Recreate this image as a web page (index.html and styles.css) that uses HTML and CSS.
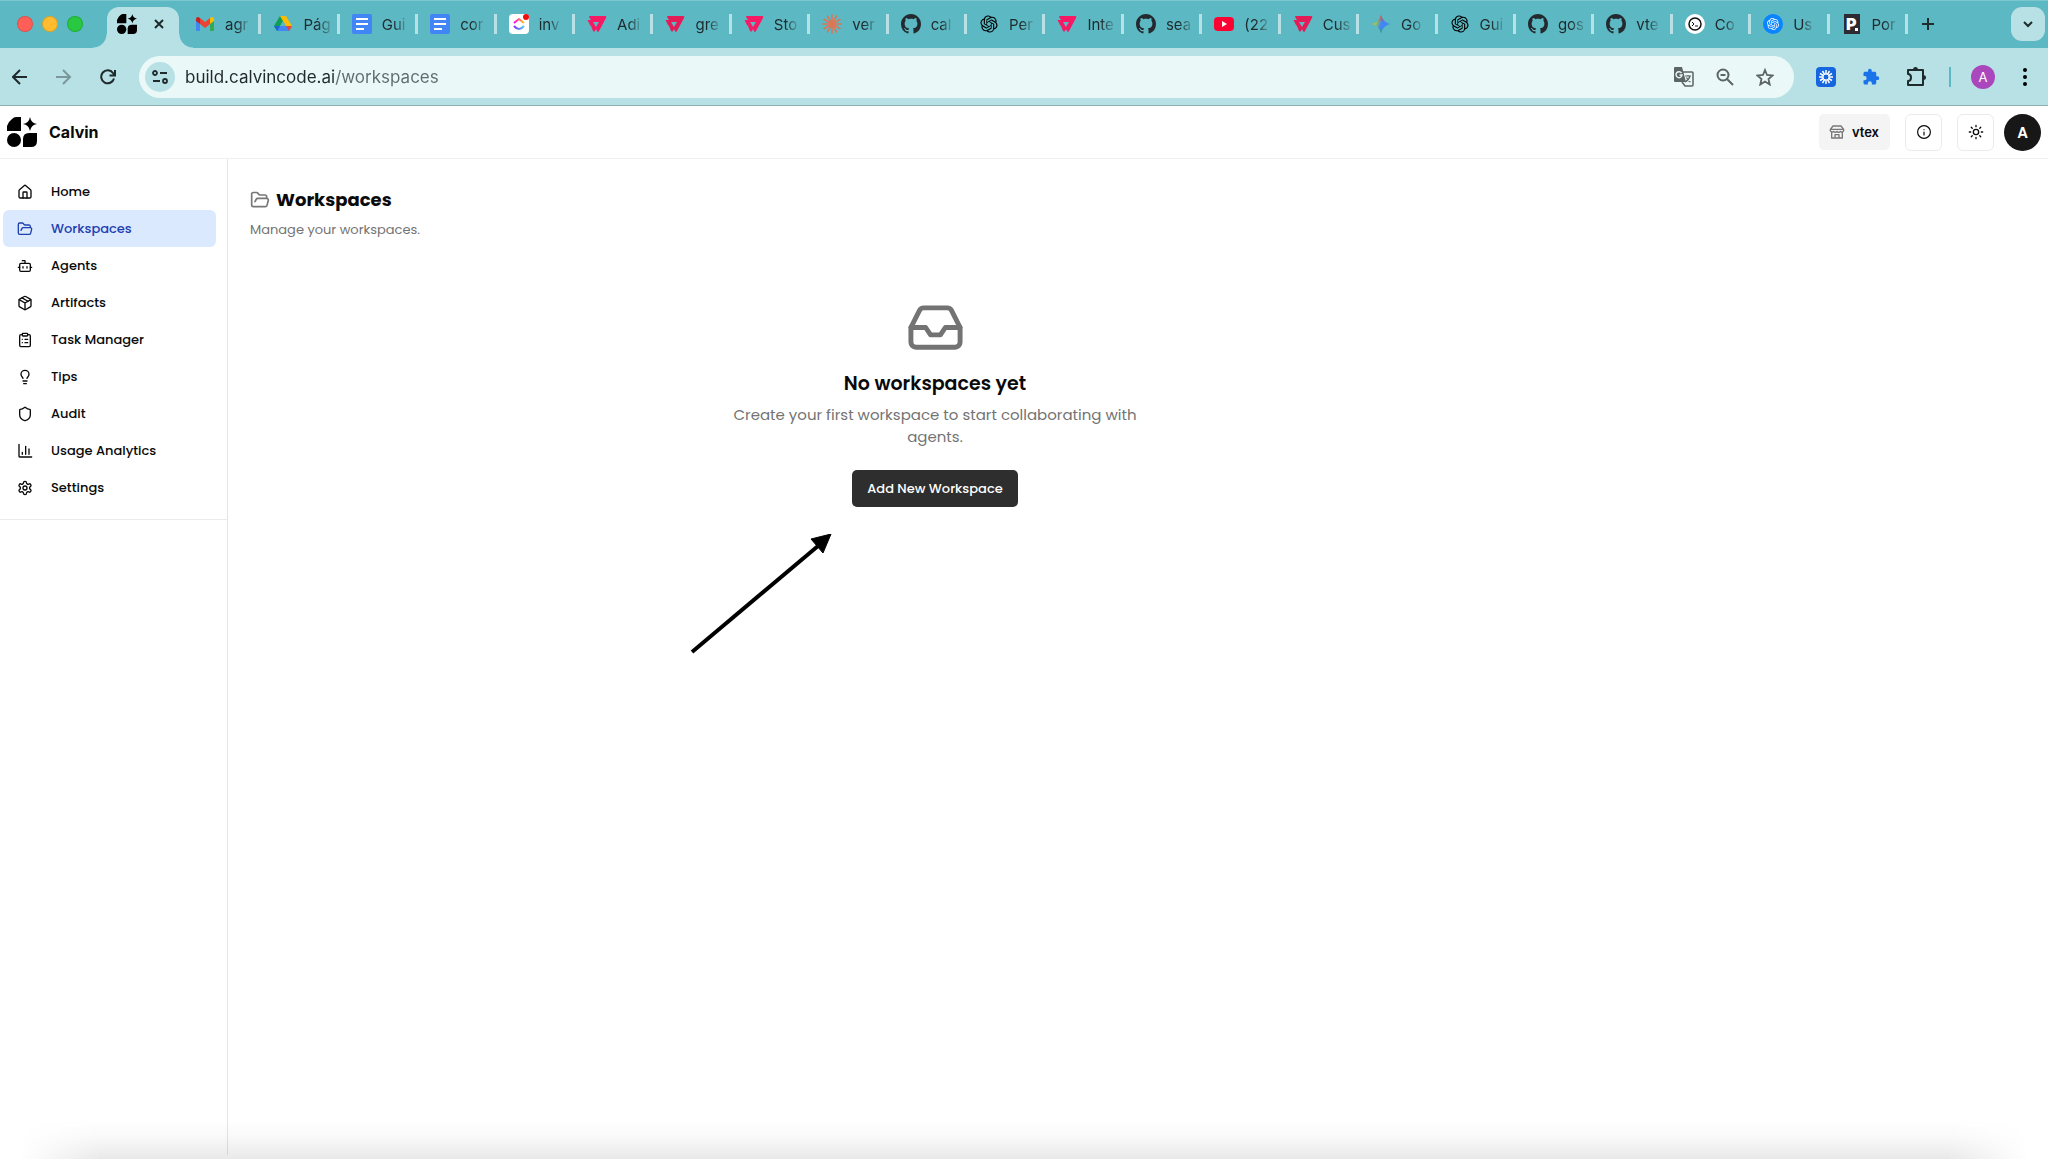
FILE: index.html
```
<!DOCTYPE html>
<html lang="en">
<head>
<meta charset="utf-8">
<title>Calvin – Workspaces</title>
<link rel="stylesheet" href="styles.css">
</head>
<body>
<svg class="sprite" aria-hidden="true">
  <symbol id="calvin" viewBox="0 0 30 30"><path d="M9 0h5v14H0V9Q1 5 5 2Q7 0 9 0zM23 0q1 6 7 7q-6 1-7 7q-1-6-7-7q6-1 7-7z"/><circle cx="7" cy="23" r="7"/><path d="M22 16h8v8q0 6-6 6h-8v-8q0-6 6-6z"/></symbol>
  <symbol id="docs" viewBox="0 0 20 20"><rect width="20" height="20" rx="2" fill="#4285f4"/><path d="M4 5h12M4 10h12M4 15h8" stroke="#fff" stroke-width="2"/></symbol>
  <symbol id="vtex" viewBox="0 0 20 20"><path d="M3 2h15q2 0 1 2l-7 13q-1 2-2 0l-1-2-1 2q-1 1-2 0L4 12 3 11 1 7q-1-1 0-1h3L2 3q0-1 1-1zM6 8l3 5 3-5z" fill-rule="evenodd"/></symbol>
  <symbol id="github" viewBox="0 0 16 16"><path fill="#24292f" d="M8 0c4.42 0 8 3.58 8 8a8.013 8.013 0 0 1-5.45 7.59c-.4.08-.55-.17-.55-.38 0-.27.01-1.13.01-2.2 0-.75-.25-1.23-.54-1.48 1.78-.2 3.65-.88 3.65-3.95 0-.88-.31-1.59-.82-2.15.08-.2.36-1.02-.08-2.12 0 0-.67-.22-2.2.82-.64-.18-1.32-.27-2-.27-.68 0-1.36.09-2 .27-1.53-1.03-2.2-.82-2.2-.82-.44 1.1-.16 1.92-.08 2.12-.51.56-.82 1.28-.82 2.15 0 3.06 1.86 3.75 3.64 3.95-.23.2-.44.55-.51 1.07-.46.21-1.61.55-2.33-.66-.15-.24-.6-.83-1.23-.82-.67.01-.27.38.01.53.34.19.73.9.82 1.13.16.45.68 1.31 2.69.94 0 .67.01 1.3.01 1.49 0 .21-.15.45-.55.38A7.995 7.995 0 0 1 0 8c0-4.42 3.58-8 8-8Z"/></symbol>
  <symbol id="openai" viewBox="-2 -2 28 28"><path d="M22.2819 9.8211a5.9847 5.9847 0 0 0-.5157-4.9108 6.0462 6.0462 0 0 0-6.5098-2.9A6.0651 6.0651 0 0 0 4.9807 4.1818a5.9847 5.9847 0 0 0-3.9977 2.9 6.0462 6.0462 0 0 0 .7427 7.0966 5.98 5.98 0 0 0 .511 4.9107 6.051 6.051 0 0 0 6.5146 2.9001A5.9847 5.9847 0 0 0 13.2599 24a6.0557 6.0557 0 0 0 5.7718-4.2058 5.9894 5.9894 0 0 0 3.9977-2.9001 6.0557 6.0557 0 0 0-.7475-7.0729zm-9.022 12.6081a4.4755 4.4755 0 0 1-2.8764-1.0408l.1419-.0804 4.7783-2.7582a.7948.7948 0 0 0 .3927-.6813v-6.7369l2.02 1.1686a.071.071 0 0 1 .038.052v5.5826a4.504 4.504 0 0 1-4.4945 4.4944zm-9.6607-4.1254a4.4708 4.4708 0 0 1-.5346-3.0137l.142.0852 4.783 2.7582a.7712.7712 0 0 0 .7806 0l5.8428-3.3685v2.3324a.0804.0804 0 0 1-.0332.0615L9.74 19.9502a4.4992 4.4992 0 0 1-6.1408-1.6464zM2.3408 7.8956a4.485 4.485 0 0 1 2.3655-1.9728V11.6a.7664.7664 0 0 0 .3879.6765l5.8144 3.3543-2.0201 1.1685a.0757.0757 0 0 1-.071 0l-4.8303-2.7865A4.504 4.504 0 0 1 2.3408 7.872zm16.5963 3.8558L13.1038 8.364 15.1192 7.2a.0757.0757 0 0 1 .071 0l4.8303 2.7913a4.4944 4.4944 0 0 1-.6765 8.1042v-5.6772a.79.79 0 0 0-.407-.667zm2.0107-3.0231l-.142-.0852-4.7735-2.7818a.7759.7759 0 0 0-.7854 0L9.409 9.2297V6.8974a.0662.0662 0 0 1 .0284-.0615l4.8303-2.7866a4.4992 4.4992 0 0 1 6.6802 4.66zM8.3065 12.863l-2.02-1.1638a.0804.0804 0 0 1-.038-.0567V6.0742a4.4992 4.4992 0 0 1 7.3757-3.4537l-.142.0805L8.704 5.459a.7948.7948 0 0 0-.3927.6813zm1.0976-2.3654l2.602-1.4998 2.6069 1.4998v2.9994l-2.5974 1.4997-2.6067-1.4997Z"/></symbol>
  <symbol id="burst" viewBox="0 0 20 20"><path fill="none" stroke="currentColor" stroke-width="1.700" stroke-linecap="round" d="M10 1v18M1 10h18M5.500 2.200l9 15.600M2.200 5.500l15.600 9M2.200 14.500l15.600-9M5.500 17.800l9-15.600"/></symbol>
  <symbol id="folder" viewBox="0 0 24 24"><path d="m6 14 1.500-2.900A2 2 0 0 1 9.240 10H20a2 2 0 0 1 1.940 2.500l-1.540 6a2 2 0 0 1-1.950 1.500H4a2 2 0 0 1-2-2V5a2 2 0 0 1 2-2h3.900a2 2 0 0 1 1.690.9l.81 1.200a2 2 0 0 0 1.670.9H18a2 2 0 0 1 2 2v2"/></symbol>
  <symbol id="puzzle" viewBox="0 0 24 24"><path d="M20.500 11H19V7c0-1.100-.9-2-2-2h-4V3.500a2.500 2.500 0 0 0-5 0V5H4c-1.100 0-2 .9-2 2v3.800h1.500a2.700 2.700 0 0 1 0 5.400H2V20c0 1.100.9 2 2 2h3.800v-1.500a2.700 2.700 0 0 1 5.400 0V22H17c1.100 0 2-.9 2-2v-4h1.500a2.500 2.500 0 0 0 0-5z"/></symbol>
</svg>

<header class="browser">
  <div class="tabstrip">
    <div class="lights"><i class="light close"></i><i class="light minimise"></i><i class="light zoom"></i></div>
    <div class="tab-active">
      <svg class="fav"><use href="#calvin"/></svg>
      <button class="bare" aria-label="Close tab"><svg class="s10" viewBox="0 0 10 10"><path d="M1 1l8 8M9 1l-8 8" stroke="#1f2a2c" stroke-width="2"/></svg></button>
    </div>
    <nav class="tabs" aria-label="Open tabs">
      <button class="tab"><svg class="fav" viewBox="0 0 20 20"><path d="M1 5v11q0 1 1 1h3V8z" fill="#4285f4"/><path d="M19 5v11q0 1-1 1h-3V8z" fill="#34a853"/><path d="M15 4l2-1q2 0 2 2v2l-4 3z" fill="#fbbc04"/><path d="M5 4L3 3Q1 3 1 5v2l4 3z" fill="#c5221f"/><path d="M5 4l5 4 5-4v6l-5 4-5-4z" fill="#ea4335"/></svg><span>agr</span></button>
      <button class="tab"><svg class="fav" viewBox="0 0 20 20"><path d="M7 2h6l-3 5-5.500 10L1 12z" fill="#0f9d58"/><path d="M7 2h6l6 10h-6z" fill="#fbbc04"/><path d="M5 12h9l3 5H4z" fill="#4285f4"/><path d="M13 12h6l-3 5z" fill="#ea4335"/><path d="M1 12h6l-3 5z" fill="#1967d2"/><path d="M10 7l3 5H7z" fill="#5cb8c2"/></svg><span>Pág</span></button>
      <button class="tab"><svg class="fav"><use href="#docs"/></svg><span>Gui</span></button>
      <button class="tab"><svg class="fav"><use href="#docs"/></svg><span>cor</span></button>
      <button class="tab"><svg class="fav" viewBox="0 0 20 20"><defs><linearGradient id="cu1"><stop stop-color="#ff02f0"/><stop offset="1" stop-color="#ffc800"/></linearGradient><linearGradient id="cu2"><stop stop-color="#8930fd"/><stop offset="1" stop-color="#49ccf9"/></linearGradient></defs><rect width="20" height="20" rx="4" fill="#fff"/><path d="M5 9l5-4 5 4" fill="none" stroke="url(#cu1)" stroke-width="2"/><path d="M5 12q5 6 10 0" fill="none" stroke="url(#cu2)" stroke-width="2"/><circle cx="17" cy="3" r="3" fill="#f10c0c"/></svg><span>inv</span></button>
      <button class="tab"><svg class="fav pink"><use href="#vtex"/></svg><span>Adi</span></button>
      <button class="tab"><svg class="fav crimson"><use href="#vtex"/></svg><span>gre</span></button>
      <button class="tab"><svg class="fav pink"><use href="#vtex"/></svg><span>Sto</span></button>
      <button class="tab"><svg class="fav clay"><use href="#burst"/></svg><span>ver</span></button>
      <button class="tab"><svg class="fav"><use href="#github"/></svg><span>cal</span></button>
      <button class="tab"><svg class="fav"><use href="#openai"/></svg><span>Per</span></button>
      <button class="tab"><svg class="fav pink"><use href="#vtex"/></svg><span>Inte</span></button>
      <button class="tab"><svg class="fav"><use href="#github"/></svg><span>sea</span></button>
      <button class="tab"><svg class="fav" viewBox="0 0 20 20"><rect y="3" width="20" height="14" rx="4" fill="#f03"/><path d="M8 7l5 3-5 3z" fill="#fff"/></svg><span>(22</span></button>
      <button class="tab"><svg class="fav crimson"><use href="#vtex"/></svg><span>Cus</span></button>
      <button class="tab"><svg class="fav" viewBox="0 0 20 20"><defs><linearGradient id="gem" y2=".3"><stop stop-color="#fbbc04"/><stop offset=".35" stop-color="#8fbf63"/><stop offset=".6" stop-color="#4285f4"/><stop offset="1" stop-color="#4285f4"/></linearGradient><linearGradient id="gem2" x2="0" y2="1"><stop stop-color="#ea4335"/><stop offset=".4" stop-color="#ea4335" stop-opacity="0"/><stop offset=".7" stop-color="#34a853" stop-opacity="0"/><stop offset="1" stop-color="#34a853"/></linearGradient></defs><path d="M10 1q2 7 9 9q-7 2-9 9q-2-7-9-9q7-2 9-9z" fill="url(#gem)"/><path d="M10 1q2 7 9 9q-7 2-9 9q-2-7-9-9q7-2 9-9z" fill="url(#gem2)"/></svg><span>Go</span></button>
      <button class="tab"><svg class="fav"><use href="#openai"/></svg><span>Gui</span></button>
      <button class="tab"><svg class="fav"><use href="#github"/></svg><span>gos</span></button>
      <button class="tab"><svg class="fav"><use href="#github"/></svg><span>vte</span></button>
      <button class="tab"><svg class="fav" viewBox="0 0 20 20"><circle cx="10" cy="10" r="10" fill="#fff"/><circle cx="10" cy="10" r="6" fill="none" stroke="#111" stroke-width="1.500"/><path d="M7 8l2 2-2 2M10 12h3" fill="none" stroke="#111"/></svg><span>Co</span></button>
      <button class="tab"><svg class="fav" viewBox="0 0 20 20"><circle cx="10" cy="10" r="10" fill="#0a84ff"/><use href="#openai" x="3" y="3" width="14" height="14" fill="#fff"/></svg><span>Us</span></button>
      <button class="tab"><svg class="fav" viewBox="0 0 20 20"><path fill="#2d2a32" d="M2 0h16v20H2z"/><text class="glyph" x="4" y="16">P</text><path fill="#fff" d="M13 14h3v3h-3z"/></svg><span>Por</span></button>
    </nav>
    <button class="bare new-tab" aria-label="New tab"><svg class="s14" viewBox="0 0 14 14"><path d="M7 1v12M1 7h12" stroke="#1f2a2c" stroke-width="2"/></svg></button>
    <button class="tab-search" aria-label="Search tabs"><svg class="s14" viewBox="0 0 14 14"><path d="M3 5l4 4 4-4" fill="none" stroke="#1f2a2c" stroke-width="2"/></svg></button>
  </div>

  <div class="toolbar">
    <button class="bare" aria-label="Back"><svg class="s16" viewBox="0 0 16 16"><path d="M15 8H2M8 1L1 8l7 7" fill="none" stroke="#1f2a2c" stroke-width="2"/></svg></button>
    <button class="bare" aria-label="Forward"><svg class="s16" viewBox="0 0 16 16"><path d="M0 8h13M7 1l7 7-7 7" fill="none" stroke="#7b979a" stroke-width="2"/></svg></button>
    <button class="bare" aria-label="Reload"><svg class="s16" viewBox="0 0 16 16"><path d="M14 9.500A6.500 6.500 0 1 1 13 4l1.500 2M15 1v5.500H9.500" fill="none" stroke="#1f2a2c" stroke-width="2"/></svg></button>
    <div class="omnibox">
      <button class="site-info" aria-label="View site information"><svg class="s16" viewBox="0 0 16 16" fill="none" stroke="#1f2a2c" stroke-width="1.800"><circle cx="3" cy="4" r="2"/><path d="M8 4h7M1 12h7"/><circle cx="13" cy="12" r="2"/></svg></button>
      <input class="url" aria-label="Address" value="build.calvincode.ai/workspaces">
      <button class="bare" aria-label="Translate"><svg class="s20" viewBox="0 0 20 20"><path d="M9 5h9q1 0 1 1v12q0 1-1 1h-7L8 15" fill="none" stroke="#5c6466" stroke-width="1.500"/><path d="M1 0h7l4 15H1q-1 0-1-1V1q0-1 1-1z" fill="#5c6466"/><path d="M7.500 6A3 3 0 1 0 8 8H5.500" fill="none" stroke="#ebf8f8" stroke-width="1.400"/><path d="M11 9h6M14 8v1M16 9q-1 4-5 6M12.500 10.500q1 3 4 4.500" fill="none" stroke="#5c6466" stroke-width="1.200"/></svg></button>
      <button class="bare" aria-label="Zoom"><svg class="s18" viewBox="0 0 18 18" fill="none" stroke="#5c6466" stroke-width="2"><circle cx="7" cy="7" r="5.500"/><path d="M11 11l6 6M4.500 7h5"/></svg></button>
      <button class="bare" aria-label="Bookmark this tab"><svg class="s18" viewBox="0 0 18 18" fill="none" stroke="#5c6466" stroke-width="1.800"><path d="M9 2l2 5 5.500.5-4 3.500 1.200 5.500L9 13.500 4.300 16.500 5.500 11l-4-3.500L7 7z"/></svg></button>
    </div>
    <div class="extensions">
      <button class="bare ext" aria-label="Claude extension"><svg class="s20" viewBox="0 0 20 20"><rect width="20" height="20" rx="4" fill="#1666e0"/><path d="M10 3v4M10 13v4M3 10h4M13 10h4M6.500 4l2 3.400M11.500 12.600l2 3.400M4 6.500l3.400 2M12.600 11.500l3.400 2M4 13.500l3.400-2M12.600 8.500l3.400-2M6.500 16l2-3.400M11.500 7.400l2-3.400" stroke="#fff" stroke-width="1.500"/><circle cx="10" cy="10" r="3" fill="none" stroke="#fff"/></svg></button>
      <button class="bare ext" aria-label="Extension"><svg class="s18" fill="#1a73e8"><use href="#puzzle"/></svg></button>
      <button class="bare ext" aria-label="Extensions"><svg class="s20" viewBox="0 0 20 20"><path d="M2 3h15v15H2v-4q3 0 3-3.500T2 7z" fill="none" stroke="#1f2a2c" stroke-width="2" stroke-linejoin="round"/><path d="M7 3q0-3 2.500-3T12 3zM17 8q3 0 3 2.500T17 13z" fill="#1f2a2c"/></svg></button>
      <i class="divider"></i>
      <button class="profile" aria-label="Profile">A</button>
      <button class="bare" aria-label="Browser menu"><svg class="s20" viewBox="0 0 20 20"><circle cx="10" cy="3" r="2"/><circle cx="10" cy="10" r="2"/><circle cx="10" cy="17" r="2"/></svg></button>
    </div>
  </div>
</header>

<header class="topbar">
  <a class="brand" href="#"><svg class="logo"><use href="#calvin"/></svg>Calvin</a>
  <button class="org"><svg class="icon s16" viewBox="0 0 24 24"><path d="M6 3h12l4 5H2zM2 8v2a3 3 0 0 0 5 1a3 3 0 0 0 5 0a3 3 0 0 0 5 0a3 3 0 0 0 5-1V8M4 12v9h16v-9M9 21v-5h6v5"/></svg>vtex</button>
  <button class="square" aria-label="Information"><svg class="icon s14" viewBox="0 0 24 24"><circle cx="12" cy="12" r="11"/><path d="M12 17v-5M12 8h.01"/></svg></button>
  <button class="square" aria-label="Toggle theme"><svg class="icon s16" viewBox="0 0 24 24"><circle cx="12" cy="12" r="4"/><path d="M12 2v2M12 20v2M4.930 4.930l1.410 1.410M17.660 17.660l1.410 1.410M2 12h2M20 12h2M6.340 17.660l-1.410 1.410M19.070 4.930l-1.410 1.410"/></svg></button>
  <button class="avatar" aria-label="Account">A</button>
</header>

<div class="layout">
  <aside class="sidebar">
    <nav class="menu">
      <a href="#"><svg class="icon s16" viewBox="0 0 24 24"><path d="M15 21v-8a1 1 0 0 0-1-1h-4a1 1 0 0 0-1 1v8"/><path d="M3 10a2 2 0 0 1 .709-1.528l7-5.999a2 2 0 0 1 2.582 0l7 5.999A2 2 0 0 1 21 10v9a2 2 0 0 1-2 2H5a2 2 0 0 1-2-2z"/></svg>Home</a>
      <a href="#" class="current"><svg class="icon s16"><use href="#folder"/></svg>Workspaces</a>
      <a href="#"><svg class="icon s16" viewBox="0 0 24 24"><path d="M12 8V4H8"/><rect width="16" height="12" x="4" y="8" rx="2"/><path d="M2 14h2M20 14h2M15 13v2M9 13v2"/></svg>Agents</a>
      <a href="#"><svg class="icon s16" viewBox="0 0 24 24"><path d="m7.500 4.270 9 5.150"/><path d="M21 8a2 2 0 0 0-1-1.730l-7-4a2 2 0 0 0-2 0l-7 4A2 2 0 0 0 3 8v8a2 2 0 0 0 1 1.730l7 4a2 2 0 0 0 2 0l7-4A2 2 0 0 0 21 16Z"/><path d="m3.300 7 8.700 5 8.700-5M12 22V12"/></svg>Artifacts</a>
      <a href="#"><svg class="icon s16" viewBox="0 0 24 24"><rect width="8" height="4" x="8" y="2" rx="1"/><path d="M16 4h2a2 2 0 0 1 2 2v14a2 2 0 0 1-2 2H6a2 2 0 0 1-2-2V6a2 2 0 0 1 2-2h2M12 11h4M12 16h4M8 11h.01M8 16h.01"/></svg>Task Manager</a>
      <a href="#"><svg class="icon s16" viewBox="0 0 24 24"><path d="M15 14c.2-1 .7-1.700 1.500-2.500 1-.9 1.500-2.200 1.500-3.500A6 6 0 0 0 6 8c0 1 .2 2.200 1.500 3.500.7.700 1.300 1.500 1.500 2.500M9 18h6M10 22h4"/></svg>Tips</a>
      <a href="#"><svg class="icon s16" viewBox="0 0 24 24"><path d="M20 13c0 5-3.500 7.500-7.660 8.950a1 1 0 0 1-.67-.01C7.500 20.500 4 18 4 13V6a1 1 0 0 1 1-1c2 0 4.500-1.200 6.240-2.720a1.170 1.170 0 0 1 1.520 0C14.510 3.810 17 5 19 5a1 1 0 0 1 1 1z"/></svg>Audit</a>
      <a href="#"><svg class="icon s16" viewBox="0 0 24 24"><path d="M3 2v18a1 1 0 0 0 1 1h18M8 17v-3M13 17V5M18 17V9"/></svg>Usage Analytics</a>
      <a href="#"><svg class="icon s16" viewBox="0 0 24 24"><path d="M12.220 2h-.44a2 2 0 0 0-2 2v.18a2 2 0 0 1-1 1.730l-.43.25a2 2 0 0 1-2 0l-.15-.08a2 2 0 0 0-2.730.73l-.22.38a2 2 0 0 0 .73 2.730l.15.1a2 2 0 0 1 1 1.720v.51a2 2 0 0 1-1 1.740l-.15.09a2 2 0 0 0-.73 2.730l.22.38a2 2 0 0 0 2.730.73l.15-.08a2 2 0 0 1 2 0l.43.25a2 2 0 0 1 1 1.730V20a2 2 0 0 0 2 2h.44a2 2 0 0 0 2-2v-.18a2 2 0 0 1 1-1.730l.43-.25a2 2 0 0 1 2 0l.15.08a2 2 0 0 0 2.730-.73l.22-.39a2 2 0 0 0-.73-2.730l-.15-.08a2 2 0 0 1-1-1.740v-.5a2 2 0 0 1 1-1.740l.15-.09a2 2 0 0 0 .73-2.730l-.22-.38a2 2 0 0 0-2.730-.73l-.15.08a2 2 0 0 1-2 0l-.43-.25a2 2 0 0 1-1-1.730V4a2 2 0 0 0-2-2z"/><circle cx="12" cy="12" r="3"/></svg>Settings</a>
    </nav>
  </aside>

  <main class="content">
    <h1><svg class="icon s20"><use href="#folder"/></svg>Workspaces</h1>
    <p class="lead">Manage your workspaces.</p>
    <section class="empty">
      <svg class="icon inbox" viewBox="0 0 24 24"><path d="M22 12h-6l-2 3h-4l-2-3H2"/><path d="M5.450 5.110 2 12v6a2 2 0 0 0 2 2h16a2 2 0 0 0 2-2v-6l-3.450-6.890A2 2 0 0 0 16.760 4H7.240a2 2 0 0 0-1.790 1.110z"/></svg>
      <h2>No workspaces yet</h2>
      <p>Create your first workspace to start collaborating with agents.</p>
      <div class="action">
        <button class="primary">Add New Workspace</button>
        <svg class="pointer" viewBox="0 0 142 120" aria-hidden="true"><path d="M2 118L128 12" stroke="#000" stroke-width="4"/><path d="M141 0L121 5l12 14z" stroke="#000"/></svg>
      </div>
    </section>
  </main>
</div>
<div class="edge-shade"></div>
</body>
</html>
```
FILE: styles.css
```
* { box-sizing: border-box; }

body {
  margin: 0;
  min-height: 100vh;
  display: flex;
  flex-direction: column;
  background: #fff;
  color: #0a0a0a;
  font-family: Poppins, "Open Sans", sans-serif;
  font-size: 13px;
}

h1, h2, p { margin: 0; }
a { color: inherit; text-decoration: none; }
button { font: inherit; color: inherit; border: 0; padding: 0; cursor: pointer; }
svg { display: block; flex: none; }

.sprite { position: absolute; width: 0; height: 0; }
.bare { display: flex; background: none; }
.icon { fill: none; stroke: currentColor; stroke-width: 2; stroke-linecap: round; stroke-linejoin: round; }
.s10 { width: 10px; height: 10px; }
.s14 { width: 14px; height: 14px; }
.s16 { width: 16px; height: 16px; }
.s18 { width: 18px; height: 18px; }
.s20 { width: 20px; height: 20px; }

/* Browser window */
.browser { font-family: Inter, sans-serif; }

.tabstrip {
  display: flex;
  align-items: center;
  height: 48px;
  padding-right: 3px;
  background: #5cb8c2;
  box-shadow: inset 0 1px #7cc6ce;
}
.lights { display: flex; gap: 9px; padding: 0 24px 0 17px; }
.light { width: 16px; height: 16px; border-radius: 50%; border: 1px solid #0002; }
.light.close { background: #ff5f57; }
.light.minimise { background: #febc2e; }
.light.zoom { background: #28c840; }

.tab-active {
  position: relative;
  align-self: flex-end;
  display: flex;
  align-items: center;
  justify-content: space-between;
  width: 72px;
  height: 41px;
  padding: 0 15px 7px 10px;
  background: #b8e1e5;
  border-radius: 12px 12px 0 0;
}
.tab-active::before, .tab-active::after {
  content: "";
  position: absolute;
  bottom: 0;
  width: 14px;
  height: 14px;
}
.tab-active::before { right: 100%; background: radial-gradient(circle at 0 0, #0000 13px, #b8e1e5 14px); }
.tab-active::after { left: 100%; background: radial-gradient(circle at 100% 0, #0000 13px, #b8e1e5 14px); }

.fav { width: 20px; height: 20px; }
.pink { fill: #f71963; }
.crimson { fill: #e31c58; }
.clay { color: #d97757; }
.glyph { fill: #fff; font: 900 16px Inter, sans-serif; }

.tabs { flex: 1; display: flex; margin-left: 4px; }
.tab {
  flex: 1;
  min-width: 0;
  height: 20px;
  display: flex;
  align-items: center;
  gap: 10px;
  padding-left: 12px;
  background: none;
  border-right: 3px solid #b8e1e5;
  font-size: 15px;
  color: #1f2a2c;
}
.tab span { mask-image: linear-gradient(90deg, #000 50%, #0003); }
.new-tab { padding: 0 76px 0 13px; }
.tab-search {
  display: flex;
  align-items: center;
  justify-content: center;
  width: 34px;
  height: 34px;
  border-radius: 11px;
  background: #b8e1e5;
}

.toolbar {
  display: flex;
  align-items: center;
  gap: 28px;
  height: 58px;
  padding: 0 13px 0 12px;
  background: #b8e1e5;
  border-bottom: 1px solid #8fb0b3;
}
.omnibox {
  flex: 1;
  display: flex;
  align-items: center;
  gap: 22px;
  height: 42px;
  margin-left: -5px;
  padding: 0 20px 0 6px;
  border-radius: 21px;
  background: #ebf8f8;
}
.site-info {
  display: flex;
  align-items: center;
  justify-content: center;
  width: 30px;
  height: 30px;
  border-radius: 50%;
  background: #b8e1e5;
}
/* Host in dark ink, path in grey */
.url {
  flex: 1;
  margin-left: -12px;
  padding: 0;
  border: 0;
  font: 17px/28px Inter, sans-serif;
  color: transparent;
  background: linear-gradient(90deg, #1f2a2c 151px, #5f6b6d 151px) text;
}
.extensions { display: flex; align-items: center; gap: 20px; margin-left: -9px; }
.ext { padding: 0 3px; }
.divider { width: 2px; height: 20px; background: #5cb8c2; }
.profile {
  width: 24px;
  height: 24px;
  border-radius: 50%;
  background: #ab47bc;
  color: #fff;
  font-size: 13px;
}

/* Application header */
.topbar {
  display: flex;
  align-items: center;
  height: 53px;
  padding: 0 7px;
  border-bottom: 1px solid #f0f0f0;
}
.brand {
  display: flex;
  align-items: center;
  gap: 12px;
  margin-right: auto;
  font: 700 16px/24px Inter, sans-serif;
}
.logo { width: 30px; height: 30px; }
.org {
  display: flex;
  align-items: center;
  gap: 7px;
  height: 36px;
  padding: 0 11px 0 10px;
  border-radius: 5px;
  background: #f4f4f4;
  font: 600 13px/20px Inter, sans-serif;
}
.org .icon { color: #777; }
.square {
  display: flex;
  align-items: center;
  justify-content: center;
  width: 37px;
  height: 37px;
  margin-left: 15px;
  border: 1px solid #ebebeb;
  border-radius: 6px;
  background: #fff;
}
.avatar {
  width: 37px;
  height: 37px;
  margin-left: 10px;
  border-radius: 50%;
  background: #171717;
  color: #fff;
  font-size: 15px;
  font-weight: 600;
}

/* Page body */
.layout { flex: 1; display: flex; }
.sidebar { flex: none; width: 228px; margin-bottom: 4px; border-right: 1px solid #e5e5e5; }
.menu { padding: 14px 11px 13px 3px; border-bottom: 1px solid #ebebeb; }
.menu a {
  display: flex;
  align-items: center;
  gap: 18px;
  height: 37px;
  padding-left: 14px;
  border-radius: 6px;
  font-weight: 500;
}
.menu .current { background: #dbe9fe; color: #1e40af; }

.content { flex: 1; max-width: 1414px; padding: 27px 22px; }
h1 {
  display: flex;
  align-items: center;
  gap: 6px;
  font-size: 18px;
  line-height: 28px;
}
h1 .icon { color: #777; }
.lead { margin-top: 5px; line-height: 22px; color: #737373; }
.empty {
  display: flex;
  flex-direction: column;
  align-items: center;
  padding-top: 57px;
  text-align: center;
}
.inbox { width: 59px; height: 59px; color: #737373; }
.empty h2 { margin-top: 13px; font-size: 19px; font-weight: 600; line-height: 28px; }
.empty p { width: 412px; margin-top: 6px; font-size: 15px; line-height: 22px; color: #737373; }
.action { position: relative; margin-top: 22px; }
.primary {
  height: 37px;
  padding: 0 15px;
  border-radius: 5px;
  background: #2e2e2e;
  color: #fff;
  font-weight: 500;
}
.pointer { position: absolute; top: 64px; right: 186px; width: 142px; height: 120px; }

.edge-shade {
  position: fixed;
  inset: auto 0 0;
  height: 40px;
  pointer-events: none;
  background: linear-gradient(#0000, #00000005 40%, #00000016);
  mask-image: linear-gradient(90deg, #0000 20px, #000 100px, #000 calc(100% - 100px), #0000 calc(100% - 20px));
}
```
